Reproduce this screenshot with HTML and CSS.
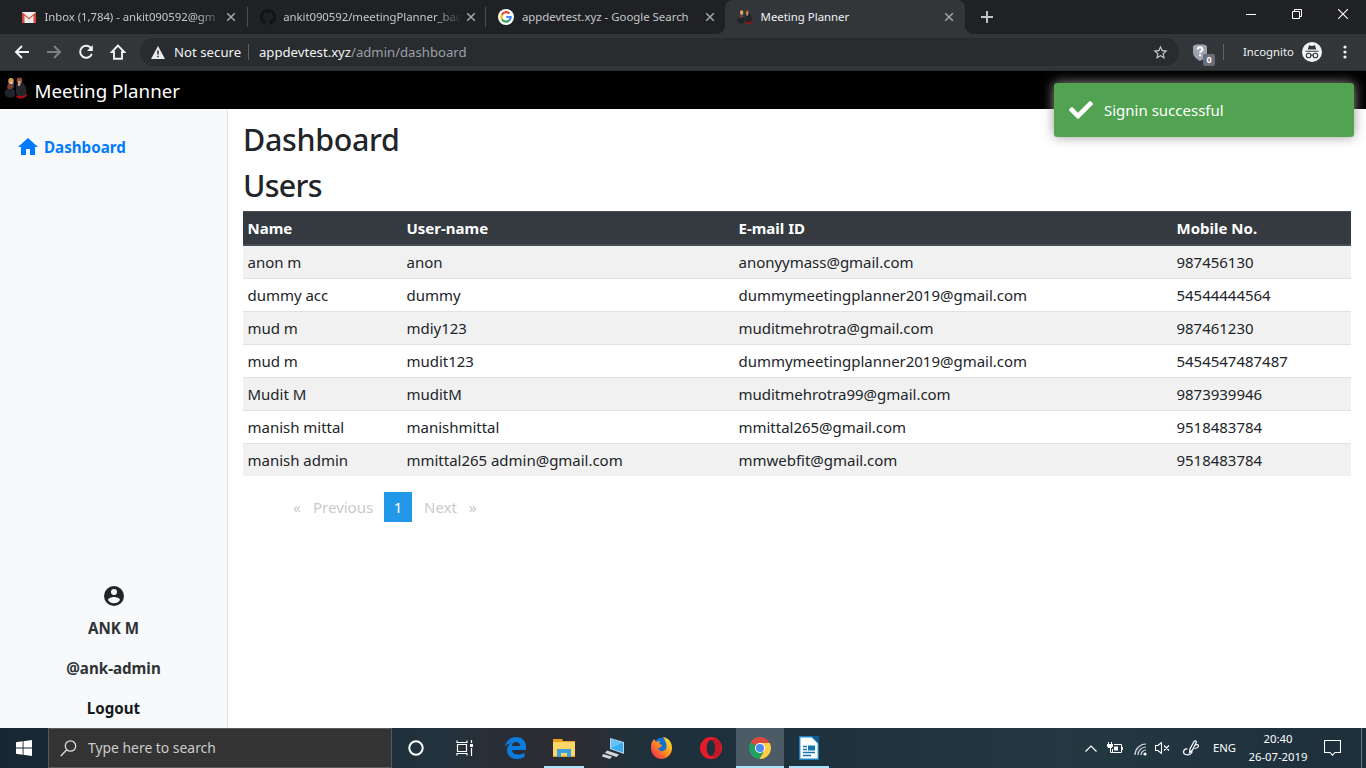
FILE: index.html
```html
<!DOCTYPE html>
<html lang="en">
<head>
<meta charset="utf-8">
<title>Meeting Planner</title>
<link rel="stylesheet" href="styles.css">
</head>
<body>
<svg class="defs" width="0" height="0">
  <defs>
    <symbol id="people" viewBox="0 0 24 22">
      <path d="M1 18c-1-4 1-7 5-7s6 3 5 7-8 3-10 0z" fill="#20242c"/>
      <path d="M4 5c0-5 6-5 6 0v6l-6 1z" fill="#293d6d"/>
      <circle cx="7" cy="3.600" r="2.600" fill="#e0a040"/>
      <path d="M5 5h4l-1 3H6z" fill="#f0c6a0"/>
      <circle cx="6" cy="9.500" r="2.800" fill="#7c3f25"/>
      <path d="M12 19c1 4 10 3 11-1l-2-3z" fill="#a80d12"/>
      <path d="M12 7c3-3 9-2 10 4s0 7-3 8-8-1-7-5z" fill="#25262b"/>
      <circle cx="15.500" cy="3.400" r="2.800" fill="#8c5130"/>
      <path d="M14 4h3l-1 5h-2z" fill="#d79b77"/>
    </symbol>
    <symbol id="close" viewBox="0 0 10 10"><path d="M1.200 1.200l7.600 7.600M8.800 1.200L1.200 8.800" fill="none" stroke="currentColor" stroke-width="1.500"/></symbol>
  </defs>
</svg>

<div class="tabstrip">
  <div class="tab tab-first">
    <svg class="favicon" viewBox="0 0 16 16"><path d="M1 3h14v11H1z" fill="#eee"/><path d="M1 14V3l7 6 7-6v11h-2.500V6.500L8 10.500l-4.500-4V14z" fill="#d54b3d"/></svg>
    <span class="tab-title fade">Inbox (1,784) - ankit090592@gm</span>
    <svg class="tab-close"><use href="#close"/></svg>
  </div>
  <div class="tab divided">
    <svg class="favicon" viewBox="0 0 16 16"><path fill="#111416" d="M8 0C3.580 0 0 3.580 0 8c0 3.540 2.290 6.530 5.470 7.590.4.070.55-.17.55-.38 0-.19-.01-.82-.01-1.490-2.010.37-2.530-.49-2.690-.94-.09-.23-.48-.94-.82-1.130-.28-.15-.68-.52-.01-.53.63-.01 1.080.58 1.230.82.72 1.210 1.870.87 2.330.66.07-.52.28-.87.51-1.070-1.780-.2-3.640-.89-3.640-3.950 0-.87.31-1.590.82-2.150-.08-.2-.36-1.020.08-2.120 0 0 .67-.21 2.200.82A7.600 7.600 0 018 3.860c.68 0 1.360.09 2 .27 1.530-1.040 2.200-.82 2.200-.82.44 1.100.16 1.920.08 2.120.51.56.82 1.270.82 2.150 0 3.070-1.870 3.750-3.650 3.950.29.25.54.73.54 1.480 0 1.070-.01 1.930-.01 2.200 0 .21.15.46.55.38A8.010 8.010 0 0016 8c0-4.420-3.580-8-8-8z"/></svg>
    <span class="tab-title fade">ankit090592/meetingPlanner_bac</span>
    <svg class="tab-close"><use href="#close"/></svg>
  </div>
  <div class="tab divided">
    <svg class="favicon" viewBox="0 0 16 16"><circle cx="8" cy="8" r="8" fill="#fff"/><g fill="none" stroke-width="2.200"><path d="M11.400 4.600A4.700 4.700 0 0 0 3.900 5.700" stroke="#ea4335"/><path d="M3.900 5.700a4.700 4.700 0 0 0 0 4.600" stroke="#fbbc05"/><path d="M3.900 10.300a4.700 4.700 0 0 0 7.300 1.100" stroke="#34a853"/><path d="M11.200 11.400c1-.9 1.500-2 1.500-3.400H8.200" stroke="#4285f4"/></g></svg>
    <span class="tab-title">appdevtest.xyz - Google Search</span>
    <svg class="tab-close"><use href="#close"/></svg>
  </div>
  <div class="tab active">
    <svg class="favicon"><use href="#people"/></svg>
    <span class="tab-title">Meeting Planner</span>
    <svg class="tab-close"><use href="#close"/></svg>
  </div>
  <svg class="new-tab" viewBox="0 0 12 12"><path d="M6 0v12M0 6h12" stroke="#c4c6c8" stroke-width="1.900"/></svg>
  <div class="window-buttons">
    <svg width="10" height="10"><path d="M0 5.500h10" stroke="#fff"/></svg>
    <svg width="10" height="10"><path d="M.5 2.500h7v7h-7zM2.500 2.500v-2h7v7h-2" fill="none" stroke="#fff"/></svg>
    <svg width="10" height="10"><path d="M0 0l10 10M10 0L0 10" stroke="#fff" stroke-width="1.100"/></svg>
  </div>
</div>

<div class="toolbar">
  <svg class="nav" viewBox="0 0 16 16"><path d="M15 8H2.500M8 2L2 8l6 6" fill="none" stroke="#f1f3f4" stroke-width="2"/></svg>
  <svg class="nav" viewBox="0 0 16 16"><path d="M1 8h12.500M8 2l6 6-6 6" fill="none" stroke="#7c8083" stroke-width="2"/></svg>
  <svg class="nav" viewBox="0 0 16 16"><path d="M13.300 4.700A6 6 0 1 0 13.800 9.800" fill="none" stroke="#f1f3f4" stroke-width="2"/><path d="M14.800 1v6H9z" fill="#f1f3f4"/></svg>
  <svg class="nav" viewBox="0 0 16 16"><path d="M8 1.500L1.700 8H4v6.700h8V8h2.300z" fill="none" stroke="#f1f3f4" stroke-width="1.900"/></svg>
  <div class="address">
    <svg class="warn" viewBox="0 0 14 13"><path d="M7 0l7 13H0z" fill="#e8eaed"/><path d="M7 4.500v4M7 9.700v1.600" stroke="#292c2f" stroke-width="1.500"/></svg>
    <span class="insecure">Not secure</span>
    <span class="url"><b>appdevtest.xyz</b>/admin/dashboard</span>
    <svg class="star" viewBox="0 0 24 24"><path fill="#c7c9cb" d="M22 9.240l-7.190-.62L12 2 9.190 8.630 2 9.240l5.460 4.730L5.820 21 12 17.270 18.180 21l-1.630-7.030L22 9.240zM12 15.400l-3.760 2.270 1-4.280-3.320-2.880 4.380-.38L12 6.100l1.710 4.040 4.380.38-3.320 2.880 1 4.280L12 15.400z"/></svg>
  </div>
  <div class="shield">
    <svg viewBox="0 0 14 17"><path d="M0 2l3-1.500h8L14 2v6c0 4-3 7-7 9-4-2-7-5-7-9z" fill="#9da3b0"/><path d="M4.700 5.500c0-3 4.700-3 4.700 0 0 1.700-2.300 1.800-2.300 3.500M7.100 10.200v2" fill="none" stroke="#fff" stroke-width="2"/></svg>
    <span class="shield-count">0</span>
  </div>
  <span class="incognito">Incognito</span>
  <svg class="spy" viewBox="0 0 20 20"><circle cx="10" cy="10" r="10" fill="#f1f3f4"/><path d="M3.500 9.700v-1h13v1zM5.700 7.500L7 3.300l3 .7 3-.7 1.300 4.200z" fill="#35373a"/><g fill="none" stroke="#35373a" stroke-width="1.100"><circle cx="6.600" cy="13.500" r="2.300"/><circle cx="13.400" cy="13.500" r="2.300"/><path d="M8.900 13.300q1.100-.8 2.200 0"/></g></svg>
  <svg class="kebab" viewBox="0 0 4 14"><g fill="#f1f3f4"><circle cx="2" cy="2" r="1.600"/><circle cx="2" cy="7" r="1.600"/><circle cx="2" cy="12" r="1.600"/></g></svg>
</div>

<header class="navbar">
  <svg class="brand-icon"><use href="#people"/></svg>
  <span class="brand">Meeting Planner</span>
  <div class="toast">
    <svg viewBox="0 0 512 512"><path fill="#fff" d="M173.898 439.404l-166.400-166.400c-9.997-9.997-9.997-26.206 0-36.204l36.203-36.204c9.997-9.998 26.207-9.998 36.204 0L192 312.690 432.095 72.596c9.997-9.997 26.207-9.997 36.204 0l36.203 36.204c9.997 9.997 9.997 26.206 0 36.204l-294.400 294.401c-9.998 9.997-26.207 9.997-36.204-.001z"/></svg>
    <span>Signin successful</span>
  </div>
</header>

<div class="content">
  <aside class="sidebar">
    <a class="side-link">
      <svg viewBox="0 0 20 17"><path d="M8 17v-6h4v6h5V9h3L10 0 0 9h3v8z" fill="#007bff"/></svg>
      <span>Dashboard</span>
    </a>
    <div class="profile">
      <svg viewBox="0 0 20 20"><path fill="#212529" d="M10 0a10 10 0 1 0 0 20 10 10 0 0 0 0-20zm0 3a3 3 0 1 1 0 6 3 3 0 0 1 0-6zm0 14.200a7.200 7.200 0 0 1-6-3.220c.03-1.990 4-3.080 6-3.080s5.970 1.090 6 3.080a7.200 7.200 0 0 1-6 3.220z"/></svg>
      <p class="full-name">ANK M</p>
      <p class="handle">@ank-admin</p>
      <p class="logout">Logout</p>
    </div>
  </aside>
  <main class="main">
    <h2 class="dash">Dashboard</h2>
    <h2 class="users">Users</h2>
    <table class="table">
      <colgroup><col class="c-name"><col class="c-user"><col class="c-mail"><col></colgroup>
      <thead><tr><th>Name</th><th>User-name</th><th>E-mail ID</th><th>Mobile No.</th></tr></thead>
      <tbody>
        <tr><td>anon m</td><td>anon</td><td>anonyymass@gmail.com</td><td>987456130</td></tr>
        <tr><td>dummy acc</td><td>dummy</td><td>dummymeetingplanner2019@gmail.com</td><td>54544444564</td></tr>
        <tr><td>mud m</td><td>mdiy123</td><td>muditmehrotra@gmail.com</td><td>987461230</td></tr>
        <tr><td>mud m</td><td>mudit123</td><td>dummymeetingplanner2019@gmail.com</td><td>5454547487487</td></tr>
        <tr><td>Mudit M</td><td>muditM</td><td>muditmehrotra99@gmail.com</td><td>9873939946</td></tr>
        <tr><td>manish mittal</td><td>manishmittal</td><td>mmittal265@gmail.com</td><td>9518483784</td></tr>
        <tr><td>manish admin</td><td>mmittal265 admin@gmail.com</td><td>mmwebfit@gmail.com</td><td>9518483784</td></tr>
      </tbody>
    </table>
    <div class="pager">
      <span class="arrow">«</span><span class="prev">Previous</span><span class="page">1</span><span class="next">Next</span><span class="arrow">»</span>
    </div>
  </main>
</div>

<footer class="taskbar">
  <div class="start"><svg width="16" height="16"><path d="M0 2.300L6.600 1.300V7.600H0zM7.500 1.200L16 0v7.600H7.500zM0 8.500h6.600v6.300L0 13.800zM7.500 8.500H16V16l-8.500-1.200z" fill="#fff"/></svg></div>
  <div class="search">
    <svg width="17" height="17"><circle cx="10.500" cy="6" r="5.200" fill="none" stroke="#ddd" stroke-width="1.300"/><path d="M6.800 9.800L.8 16" stroke="#ddd" stroke-width="1.300"/></svg>
    <span>Type here to search</span>
  </div>
  <div class="apps">
    <div class="app system"><svg width="16" height="16"><circle cx="8" cy="8" r="6.700" fill="none" stroke="#fff" stroke-width="2"/></svg></div>
    <div class="app system"><svg width="17" height="16"><path d="M1 .5v2h10v-2M1 15.500v-2h10v2M1.500 4.500h9v7h-9zM15.500 0v3M15.500 8v8" fill="none" stroke="#fff" stroke-width="1.200"/><path d="M14 4h3v3h-3z" fill="#fff"/></svg></div>
    <div class="app edge"><svg width="21" height="22"><path d="M0 9.500C1 4 5 0 11 0c6 0 10 4 10 9.500V13H7c.3 3 2.500 4.500 6 4.500 2.500 0 4.500-.6 6.500-1.800V20c-2.200 1.300-4.700 2-7.500 2-6 0-10-3.400-10-8.500 0-3 1.300-5.600 4-7.200C3.500 6.800 1.500 8 0 9.500zM7 9h8c0-2.600-1.500-4-3.900-4C8.800 5 7.300 6.600 7 9z" fill="#0b7bdc"/></svg></div>
    <div class="app open"><svg width="22" height="18"><path d="M0 0h9l1 2h12v16H0z" fill="#e9a11c"/><path d="M0 3h22v14H0z" fill="#ffd768"/><path d="M4 18v-8h14v8h-4v-4H8v4z" fill="#3f9ede"/></svg></div>
    <div class="app"><svg width="22" height="21"><path d="M8 0l14 4v12L8 11z" fill="#b9d7e7"/><path d="M9 1.300l12 3.400v9.800L9 10.200z" fill="#3aaaf2"/><path d="M9 1.300l12 3.400-12 5.500z" fill="#66c3fa"/><path d="M5 12.500l12 4-2.500 2.500L3 15zM1 16l9 2.500L8 21l-8-2.500z" fill="#d5d8da"/></svg></div>
    <div class="app"><svg width="22" height="22"><defs><linearGradient id="fox" x1="1" x2="0" y2="1"><stop stop-color="#fff33b"/><stop offset=".45" stop-color="#ff9b18"/><stop offset="1" stop-color="#f6125f"/></linearGradient></defs><circle cx="11" cy="9.500" r="9" fill="#1670cf"/><path d="M1 5l2-3 2 3 4-1-1 3 3 1-1 2-3 1c1 4 6 4 8 1 1.500-3 0-8-3-12 6 1 9 6 9 11a10.500 10.500 0 0 1-21 1C0 9 0 7 1 5z" fill="url(#fox)"/></svg></div>
    <div class="app"><svg width="22" height="22"><path fill-rule="evenodd" d="M11 0a11 11 0 1 0 0 22 11 11 0 0 0 0-22zm0 3c2.500 0 4.300 3.500 4.300 8s-1.800 8-4.300 8-4.300-3.500-4.300-8S8.500 3 11 3z" fill="#e71b28"/><path d="M11 3c6-3 10 2 10 8s-4 11-10 8c2.500 0 4.300-3.500 4.300-8S13.500 3 11 3z" fill="#c51825"/></svg></div>
    <div class="app current"><svg width="22" height="22"><path d="M11 11L1.500 5.500A11 11 0 0 1 20.500 5.500z" fill="#dd4b3e"/><path d="M11 11L1.500 5.500A11 11 0 0 0 10.500 22L15 13z" fill="#20a15f"/><path d="M11 6h9.800A11 11 0 0 1 10.500 22l5-9z" fill="#ffcd46"/><circle cx="11" cy="11" r="5.100" fill="#fff"/><circle cx="11" cy="11" r="4.100" fill="#4889f4"/></svg></div>
    <div class="app open"><svg width="20" height="24"><path d="M.7.7H13L19.300 7v16.300H.7z" fill="#fff" stroke="#1c82bd" stroke-width="1.400"/><path d="M13 0h7v8z" fill="#0c5c91"/><path d="M4 10.500h4M4 13.500h4M4 16.500h12M4 19.500h8" stroke="#1476ad" stroke-width="1.400"/><path d="M9 9.500h7v5H9z" fill="#1476ad"/></svg></div>
  </div>
  <div class="tray">
    <svg class="chev" width="12" height="7"><path d="M.5 6.500L6 1l5.500 5.500" fill="none" stroke="#fff" stroke-width="1.200"/></svg>
    <svg class="battery" width="16" height="12"><path d="M7 2.500h7.500v8h-9V7M15.500 5v3M1.500 0v2M4.500 0v2M3.500 6v4.500h2" fill="none" stroke="#fff"/><path d="M0 2h6v2.500L4.500 6h-3L0 4.500zM7 4.500h4v4H7z" fill="#fff"/></svg>
    <svg class="wifi" width="13" height="13"><g fill="none" stroke="#d2d8da" stroke-width="1.200"><path d="M1 12A11 11 0 0 1 12 1M4 12a8 8 0 0 1 8-8M7 12a5 5 0 0 1 5-5"/></g><circle cx="11" cy="11" r="1.600" fill="#fff"/></svg>
    <svg class="sound" width="15" height="12"><path d="M.5 3.500H3L6.500.5v11L3 8.500H.5zM9 3.500l5 5M14 3.500l-5 5" fill="none" stroke="#fff" stroke-width="1.100"/></svg>
    <svg class="pen" width="16" height="16"><path d="M6.500 12.500L7 9l4-7.500q1.500-1.500 2.500.5L9.500 10zM4.500 9C0 8.500-.5 13.500 2.500 14.500S8 14 9.500 11.500M12.500 5c3-1 3.500.5 2.500 2s-2 1.500-3.500 1.500" fill="none" stroke="#fff" stroke-width="1.200"/></svg>
    <span class="lang">ENG</span>
    <div class="clock"><span>20:40</span><span>26-07-2019</span></div>
    <svg class="note" width="17" height="16"><path d="M.5.500h16v12h-5.500l-2.500 2.700L6 12.500H.5z" fill="none" stroke="#fff" stroke-width="1.100"/></svg>
  </div>
</footer>
</body>
</html>
```
FILE: styles.css
```css
* { box-sizing: border-box; }
body {
  margin: 0; width: 1366px; height: 768px; overflow: hidden;
  display: flex; flex-direction: column;
  font: 15px/24px "Noto Sans", "Open Sans", sans-serif; color: #212529; background: #fff;
}
svg { display: block; flex: none; }
.defs { position: absolute; }
p, h2 { margin: 0; }

.tabstrip { display: flex; height: 34px; background: #202124; padding-left: 9px; flex: none; }
.tab { display: flex; align-items: center; width: 238.700px; height: 34px; padding: 0 11px 0 12px; color: #c3c7cc; font-size: 11.400px; position: relative; flex: none; }
.tab-first { padding-right: 12px; }
.tab.divided { padding-right: 10px; }
.tab.divided::before { content: ""; position: absolute; left: -1px; top: 7px; width: 1px; height: 20px; background: #4a4c50; }
.favicon { width: 16px; height: 16px; margin-right: 7.500px; }
.tab-title { width: 180px; white-space: nowrap; }
.fade { letter-spacing: -.06px; -webkit-mask-image: linear-gradient(90deg, #000 152px, transparent 179px); mask-image: linear-gradient(90deg, #000 152px, transparent 179px); }
.tab-close { width: 10px; height: 10px; margin-left: auto; color: #a4a7aa; }
.tab.active { width: 240px; background: #323639; color: #f1f3f4; border-radius: 8px 8px 0 0; }
.tab.active::before, .tab.active::after { content: ""; position: absolute; bottom: 0; width: 8px; height: 8px; }
.tab.active::before { left: -8px; background: radial-gradient(circle at 0 0, transparent 7.500px, #323639 8px); }
.tab.active::after { right: -8px; background: radial-gradient(circle at 100% 0, transparent 7.500px, #323639 8px); }
.new-tab { width: 12px; height: 12px; margin: 11px 0 0 16px; }
.window-buttons { display: flex; gap: 36px; margin: 9px 18px 0 auto; }

.toolbar { display: flex; align-items: center; height: 37px; flex: none; background: #323639; border-bottom: 1px solid #282b2d; padding-left: 14px; color: #f1f3f4; }
.nav { width: 16px; height: 16px; margin-right: 16px; }
.address { display: flex; align-items: center; width: 1039px; height: 28px; margin-left: -2px; border-radius: 14px; background: #292c2f; font-size: 13.150px; padding: 0 11px; flex: none; }
.warn { width: 14px; height: 13px; margin-right: 9px; }
.insecure { width: 75px; height: 16px; line-height: 16px; border-right: 1px solid #5f6367; white-space: nowrap; letter-spacing: .04px; }
.url { margin-left: 10px; color: #9aa0a6; white-space: nowrap; }
.url b { font-weight: 400; color: #f1f3f4; }
.star { width: 17px; height: 17px; margin-left: auto; margin-right: -1px; }
.shield { display: flex; width: 31px; height: 16px; margin-left: 14px; border-right: 1px solid #5f6367; position: relative; flex: none; }
.shield svg { width: 14px; height: 17px; }
.shield-count { position: absolute; left: 10px; top: 10px; width: 12px; height: 12px; border-radius: 2px; background: #6b6d7a; color: #fff; font: bold 9px/12px "Noto Sans", sans-serif; text-align: center; }
.incognito { font-size: 11.300px; width: 52px; margin-left: 19px; white-space: nowrap; }
.spy { width: 20px; height: 20px; margin-left: 7px; }
.kebab { width: 4px; height: 14px; margin-left: 20.500px; }

.navbar { display: flex; align-items: center; height: 38px; background: #000; flex: none; padding-left: 4px; position: relative; }
.brand-icon { width: 24px; height: 22px; margin-top: -4px; }
.brand { color: #fff; font-size: 18.700px; margin-left: 6.500px; margin-top: 2px; }
.toast { position: absolute; z-index: 2; left: 1054px; top: 12px; width: 300px; height: 54px; border-radius: 3px; background: #51a351; color: #fff; display: flex; align-items: center; padding-left: 15px; gap: 11px; box-shadow: 0 0 12px #999; }
.toast svg { width: 24px; height: 24px; }

.content { display: flex; height: 619px; flex: none; }
.sidebar { width: 228px; border-right: 1px solid #dee2e6; background: #f8f9fa; display: flex; flex-direction: column; font-weight: 700; font-size: 15.150px; flex: none; }
.side-link { display: flex; align-items: center; gap: 6px; padding: 26px 0 0 18px; color: #007bff; }
.side-link svg { width: 20px; height: 17px; margin-bottom: 1px; }
.profile { margin-top: auto; display: flex; flex-direction: column; align-items: center; padding-bottom: 8px; color: #2f3336; }
.profile svg { width: 20px; height: 20px; margin-bottom: 10px; }
.profile p + p { margin-top: 16px; }
.logout { color: #16191c; }

.main { flex: 1; padding: 12px 15px 0; }
h2 { font-size: 30.400px; line-height: 38px; font-weight: 500; letter-spacing: -.3px; }
.users { margin-top: 8px; letter-spacing: -.7px; }
.table { width: 1108px; margin-top: 6px; table-layout: fixed; border-collapse: separate; border-spacing: 0; }
.c-name { width: 159px; }
.c-user { width: 332px; }
.c-mail { width: 438px; }
th, td { padding: 4px 4.500px; text-align: left; white-space: nowrap; }
th { height: 35px; background: #343a40; color: #fff; border-top: 1px solid #454d55; border-bottom: 2px solid #454d55; }
td { border-top: 1px solid #dee2e6; height: 33px; letter-spacing: -.02px; }
tbody tr:first-child td { border-top: 0; height: 32px; }
tbody tr:nth-child(odd) td { background: #f1f1f1; }

.pager { display: flex; align-items: center; height: 30px; margin: 16px 0 0 50px; color: #cacaca; }
.page { width: 28px; height: 30px; line-height: 30px; margin: 0 12px 0 11px; text-align: center; background: #2199e8; color: #fefefe; }
.arrow { width: 8px; }
.prev { margin-left: 12px; width: 60px; }
.next { width: 33px; margin-right: 12px; }

.taskbar { display: flex; height: 40px; flex: none; color: #fff; background: linear-gradient(90deg, #172833 0, #1d2f3b 28%, #23333e 32%, #2b2c34 38%, #2d2d33 42%, #23313b 46%, #1d303c 49%, #1e323e 60%, #243842 78%, #1c2f3b 100%); }
.start { width: 48px; padding: 12px 16px; flex: none; }
.search { width: 344px; border: 1px solid #59595a; background: #333; color: #ccc; display: flex; align-items: center; padding-left: 11px; gap: 11px; font-size: 13.900px; flex: none; }
.apps { display: flex; gap: 1px; flex: none; }
.app { width: 48px; height: 40px; display: flex; align-items: center; justify-content: center; flex: none; position: relative; }
.app.system + .app.system { margin-left: -1px; }
.app.edge { margin-left: 2px; }
.open::after, .current::after { content: ""; position: absolute; bottom: 0; left: 4px; right: 4px; height: 2px; background: #a9e2fb; }
.current { background: #4c5c66; }
.current::after { left: 0; right: 0; }
.tray { display: flex; align-items: center; margin-left: auto; margin-right: 4px; padding-right: 20px; border-right: 1px solid #6b7880; font-size: 11.300px; flex: none; }
.chev { margin-right: 10px; }
.battery { margin-right: 11px; }
.wifi { margin-right: 8px; margin-top: 3px; }
.sound { margin-right: 13px; }
.pen { margin-right: 14px; }
.lang { width: 24px; margin-right: 11px; }
.clock { width: 60px; display: flex; flex-direction: column; align-items: center; line-height: 18px; margin-right: 16px; white-space: nowrap; }
```
